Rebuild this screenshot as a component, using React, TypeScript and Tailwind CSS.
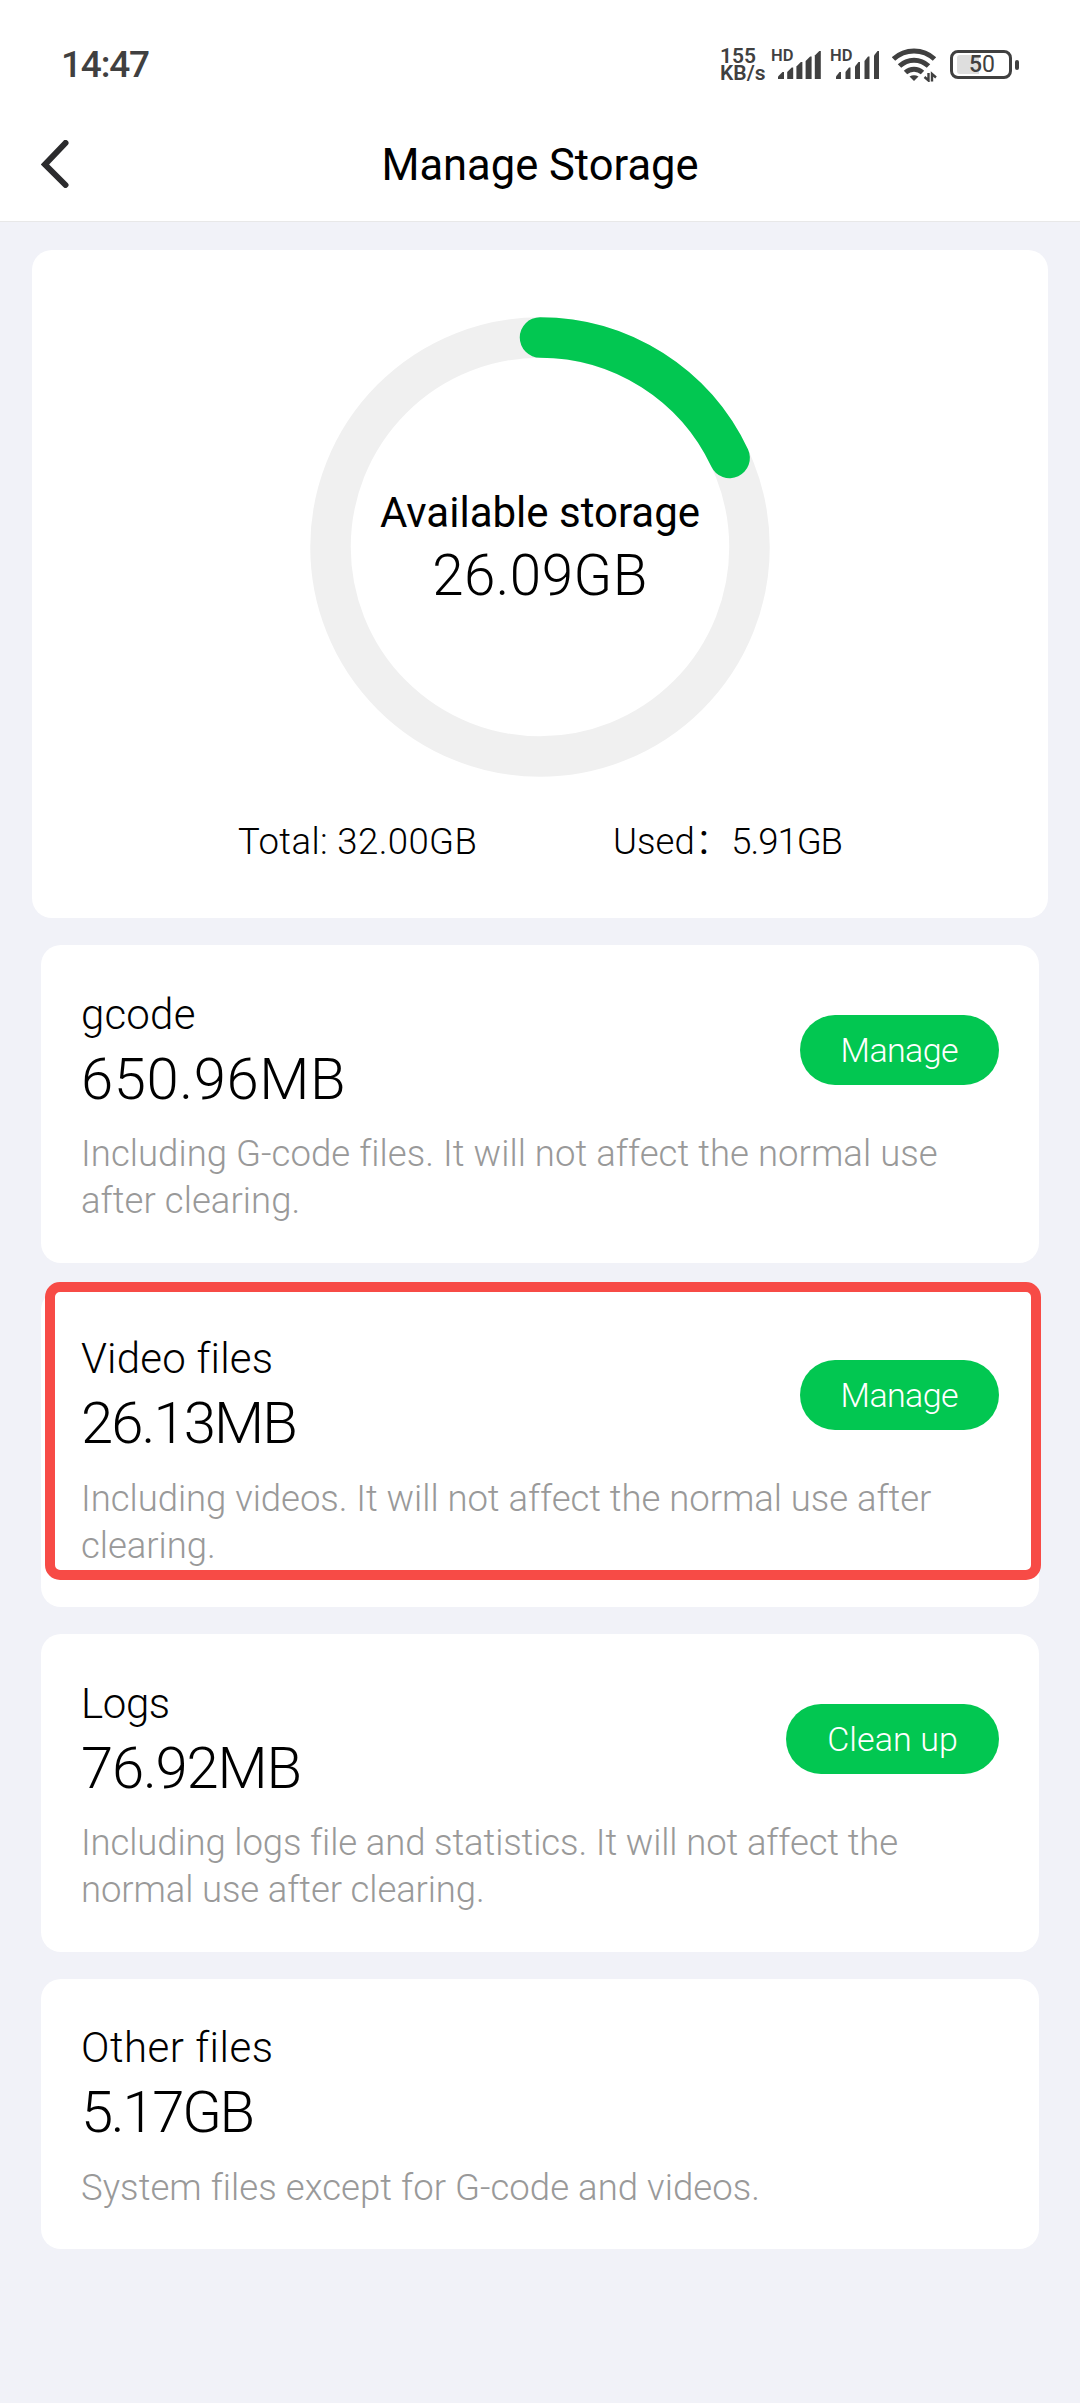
import React from 'react';

interface StorageItem {
  name: string;
  size: string;
  description: string;
  action?: string;
  highlighted?: boolean;
  // letter spacing, tuned per row
  nameClass: string;
  sizeClass: string;
  textClass: string;
  actionClass?: string;
}

const ITEMS: StorageItem[] = [
  {
    name: 'gcode',
    size: '650.96MB',
    description: 'Including G-code files. It will not affect the normal use after clearing.',
    action: 'Manage',
    nameClass: 'tracking-[0.2px]',
    sizeClass: 'tracking-[0.6px]',
    textClass: 'tracking-[0.05px]',
    actionClass: 'tracking-[-0.6px]',
  },
  {
    name: 'Video files',
    size: '26.13MB',
    description: 'Including videos. It will not affect the normal use after clearing.',
    action: 'Manage',
    highlighted: true,
    nameClass: 'tracking-[0.2px]',
    sizeClass: 'tracking-[-1.9px]',
    textClass: 'tracking-[-0.04px]',
    actionClass: 'tracking-[-0.6px]',
  },
  {
    name: 'Logs',
    size: '76.92MB',
    description: 'Including logs file and statistics. It will not affect the normal use after clearing.',
    action: 'Clean up',
    nameClass: 'tracking-[-0.4px]',
    sizeClass: 'tracking-[-1.2px]',
    textClass: 'tracking-[-0.12px]',
    actionClass: 'tracking-[0.1px]',
  },
  {
    name: 'Other files',
    size: '5.17GB',
    description: 'System files except for G-code and videos.',
    nameClass: 'tracking-[0.5px]',
    sizeClass: 'tracking-[-2.3px]',
    textClass: 'tracking-[0.05px]',
  },
];

const SignalIcon = ({ narrow }: { narrow?: boolean }) => {
  const w = narrow ? 5 : 6;
  const step = narrow ? 9.5 : 9.2;
  const tops = [22, 17.5, 12, 6.5, 1];
  return (
    <svg width="44" height="30" viewBox="0 0 44 30" fill="#404040">
      {tops.map((top, i) => {
        const x = i * step;
        return <path key={i} d={`M${x} ${top + 4.5}L${x + w - 1.5} ${top}H${x + w}V29H${x}Z`} />;
      })}
    </svg>
  );
};

const WifiIcon = () => (
  <svg width="46" height="36" viewBox="0 0 46 36" fill="none" stroke="#404040">
    <path d="M1.5 13A30 30 0 0 1 42.5 13" strokeWidth="5" />
    <path d="M7.5 20A21 21 0 0 1 36.5 20" strokeWidth="5" />
    <path d="M13.5 26.5A12.5 12.5 0 0 1 30.5 26.5" strokeWidth="5" />
    <path d="M17.5 30.5Q22 28 26.5 30.5L22 35Z" fill="#404040" stroke="none" />
    {/* up / down traffic arrows */}
    <path d="M36.5 27V34.5L32.5 31M40 35.5V28L44 31.5" strokeWidth="2.4" />
  </svg>
);

const BatteryIcon = () => (
  <div className="flex items-center">
    <div className="relative h-[29px] w-[62px] rounded-[8px] border-[3px] border-[#404040]">
      <div className="absolute top-[2px] bottom-[2px] left-[4px] w-[22px] rounded-l-[3px] bg-[#dedede]" />
      <span className="absolute inset-0 pl-[2px] text-center text-[23px] leading-[24px] font-medium text-[#404040]">
        5<span className="font-normal">0</span>
      </span>
    </div>
    <div className="ml-[3px] h-[10px] w-[4px] rounded-[2px] bg-[#404040]" />
  </div>
);

const StatusBar = () => (
  <div className="flex h-[84px] items-start justify-between pr-[61px] pl-[61px] text-[#404040]">
    <span className="mt-[41px] text-[37px] leading-[48px] font-medium tracking-[-1.2px]">14:47</span>
    <div className="flex items-start font-semibold">
      <div className="mt-[48px] w-[51px] text-[21px] leading-[17px]">
        <div>155</div>
        <div>KB/s</div>
      </div>
      <span className="mt-[47px] w-[7px] text-[16.5px] leading-[17px]">HD</span>
      <div className="mt-[50px] w-[52px]">
        <SignalIcon />
      </div>
      <span className="mt-[47px] w-[6px] text-[16.5px] leading-[17px]">HD</span>
      <div className="mt-[50px] w-[56px]">
        <SignalIcon narrow />
      </div>
      <div className="mt-[46px] w-[58px]">
        <WifiIcon />
      </div>
      <div className="mt-[50px]">
        <BatteryIcon />
      </div>
    </div>
  </div>
);

const Header = () => (
  <div className="flex h-[138px] items-center border-b border-[#e8e8e8] px-[41px] pt-[27px]">
    <svg className="-mt-1" width="28" height="48" viewBox="0 0 28 48" fill="none">
      <path d="M24.5 3L4 24.5L24.5 45" stroke="#2b2b2d" strokeWidth="6" strokeLinecap="round" />
    </svg>
    <h1 className="mr-[28px] flex-1 text-center text-[43.5px] leading-[56px] font-normal">
      Manage Storage
    </h1>
  </div>
);

const RADIUS = 209.5;

const UsageRing = ({ ratio }: { ratio: number }) => {
  const length = 2 * Math.PI * RADIUS;
  return (
    <div className="relative h-[460px] w-[460px]">
      <svg width="460" height="460" viewBox="0 0 460 460" fill="none" strokeWidth="40.5">
        <circle cx="230" cy="230" r={RADIUS} stroke="#f0f0f0" />
        <circle
          cx="230"
          cy="230"
          r={RADIUS}
          stroke="#02c751"
          strokeLinecap="round"
          strokeDasharray={`${length * ratio} ${length}`}
          transform="rotate(-90 230 230)"
        />
      </svg>
      <div className="absolute inset-0 flex flex-col items-center justify-center pt-[2px]">
        <span className="text-[42px] leading-[56px] font-normal">Available storage</span>
        <span className="text-[56.5px] leading-[70px] tracking-[0.5px]">26.09GB</span>
      </div>
    </div>
  );
};

const SummaryCard = () => (
  <div className="mx-8 flex h-[668px] flex-col items-center rounded-[20px] bg-white pt-[67px]">
    <UsageRing ratio={0.18} />
    <div className="mt-[41px] flex w-[604px] justify-between text-[36.5px] leading-[48px] font-[350] whitespace-nowrap">
      <span className="tracking-[0.4px]">Total: 32.00GB</span>
      <span>
        Used
        <span className="font-['Noto_Sans_CJK_SC',sans-serif] leading-none font-light">：</span>
        <span className="tracking-[-1px]">5.91GB</span>
      </span>
    </div>
  </div>
);

const StorageCard = ({ item }: { item: StorageItem }) => (
  <div className="relative rounded-[20px] bg-white px-[40px] pt-[41.5px] pb-[38.5px]">
    <div className="flex items-center justify-between">
      <div>
        <div className={`text-[42px] leading-[56px] ${item.nameClass}`}>{item.name}</div>
        <div className={`mt-px text-[58px] leading-[70px] ${item.sizeClass}`}>{item.size}</div>
      </div>
      {item.action && (
        <button
          className={`h-[70px] rounded-full bg-[#02c751] px-[41px] text-[34px] leading-[70px] text-white ${item.actionClass}`}
        >
          {item.action}
        </button>
      )}
    </div>
    <p className={`mt-[16.5px] text-[36.5px] leading-[47px] text-[#999999] ${item.textClass}`}>{item.description}</p>
    {item.highlighted && (
      <div className="absolute -top-[8px] -right-[2px] bottom-[27px] left-[4px] rounded-[15px] border-[10px] border-[#f74b46]" />
    )}
  </div>
);

export default function App() {
  return (
    <div className="min-h-[2403px] w-[1080px] bg-[#f1f2f8] font-[Roboto,'Noto_Sans_CJK_SC',sans-serif] font-light text-black [font-variant-ligatures:none]">
      <div className="bg-white">
        <StatusBar />
        <Header />
      </div>
      <div className="pt-[28px]">
        <SummaryCard />
        <div className="mx-[41px] mt-[27px] flex flex-col gap-[27px]">
          {ITEMS.map((item) => (
            <StorageCard key={item.name} item={item} />
          ))}
        </div>
      </div>
    </div>
  );
}
